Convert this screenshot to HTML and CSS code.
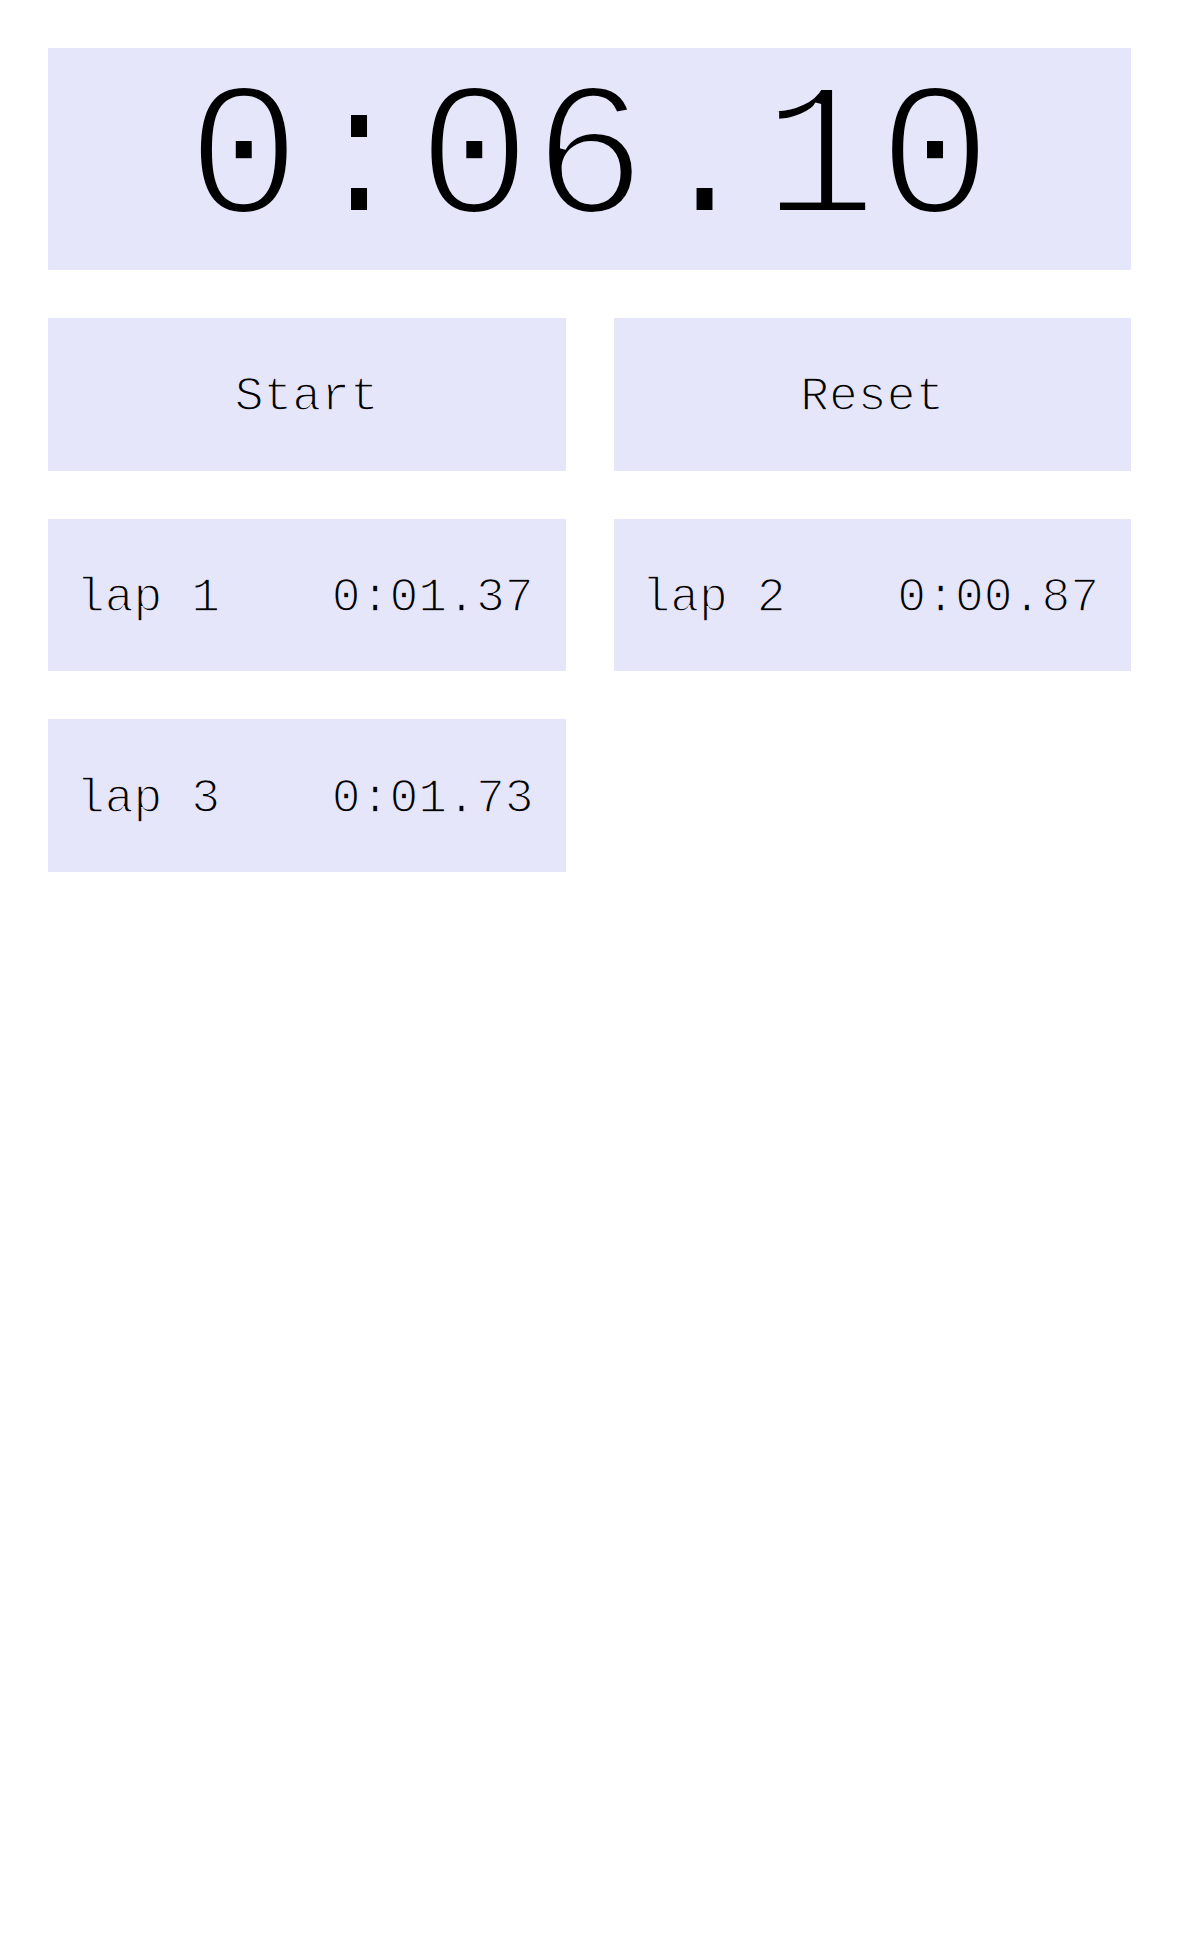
FILE: index.html
```html
<!DOCTYPE html>
<html>
<head>
<meta charset="utf-8">
<title>Stopwatch</title>
<link rel="stylesheet" href="styles.css">
</head>
<body>
<main class="app">
  <div class="display">0:06.10</div>
  <div class="grid">
    <button class="cell btn">Start</button>
    <button class="cell btn">Reset</button>
    <div class="cell lap"><span>lap 1</span><span>0:01.37</span></div>
    <div class="cell lap"><span>lap 2</span><span>0:00.87</span></div>
    <div class="cell lap"><span>lap 3</span><span>0:01.73</span></div>
  </div>
</main>
</body>
</html>
```
FILE: styles.css
```css
html, body {
  margin: 0;
  padding: 0;
  background: #ffffff;
}
body {
  font-family: "Liberation Mono", "Courier New", monospace;
  color: #000;
}
.app {
  padding: 48px;
  display: flex;
  flex-direction: column;
  gap: 48px;
}
.display {
  background: #e6e6fa;
  height: 222px;
  box-sizing: border-box;
  padding-top: 5px;
  display: flex;
  align-items: center;
  justify-content: center;
  font-size: 192px;
  line-height: 1;
  -webkit-text-stroke: 6px #e6e6fa;
  paint-order: fill stroke;
}
.grid {
  display: grid;
  grid-template-columns: 1fr 1fr;
  gap: 48px;
}
.cell {
  background: #e6e6fa;
  height: 152.67px;
  display: flex;
  align-items: center;
  font-family: "Liberation Mono", "Courier New", monospace;
  font-size: 48px;
  color: #000;
  box-sizing: border-box;
  padding-top: 7px;
  -webkit-text-stroke: 1.5px #e6e6fa;
  paint-order: fill stroke;
}
.btn {
  border: none;
  margin: 0;
  justify-content: center;
}
.lap {
  justify-content: space-between;
  padding-left: 28px;
  padding-right: 32px;
}
```
